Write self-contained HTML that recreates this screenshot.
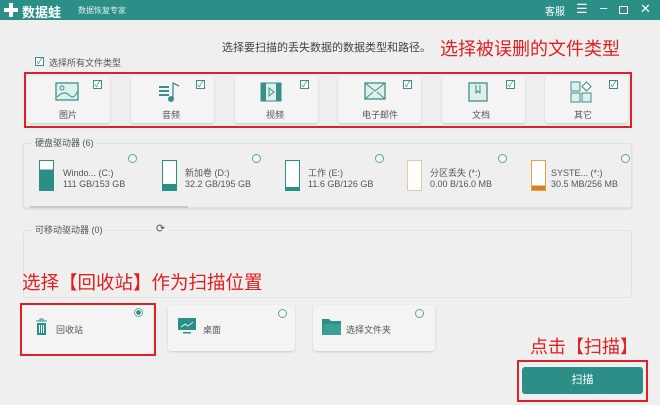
<!DOCTYPE html>
<html><head><meta charset="utf-8"><style>
*{margin:0;padding:0;box-sizing:border-box}
body{width:660px;height:405px;background:#efefef;font-family:"Liberation Sans","Noto Sans CJK SC",sans-serif;position:relative;overflow:hidden;color:#444}
.a{position:absolute}
.hdr{left:0;top:0;width:660px;height:20px;background:#2b8f88;color:#fff}
.red{color:#e02020;font-size:18px;white-space:nowrap}
.rb{border:2px solid #d8232a}
.card{background:#f4f4f4;box-shadow:0 1px 2px rgba(0,0,0,.15);border-radius:3px}
.cb{width:9px;height:9px;border:1px solid #3a8f88;background:#fff;font-size:8px;line-height:7px;text-align:center;color:#2b7f78}
.lbl{font-size:9px;color:#555;white-space:nowrap}
.rad{width:9px;height:9px;border:1px solid #5aa79f;border-radius:50%;background:#f6f6f6}
.box{border:1px solid #e2e2e2;background:#efefef;border-radius:3px}
.drv{width:15px;height:31px;border:1.5px solid #2b8f88;background:#fff}
</style></head><body>
<div class="a hdr">
 <div class="a" style="left:4px;top:3px;width:14px;height:14px"><div class="a" style="left:5px;top:0;width:4px;height:14px;background:#fff"></div><div class="a" style="left:0;top:5px;width:14px;height:4px;background:#fff"></div></div>
 <div class="a" style="left:22px;top:2px;font-size:13px;font-weight:bold">数据蛙</div>
 <div class="a" style="left:78px;top:5px;font-size:8px;opacity:.85">数据恢复专家</div>
 <div class="a" style="left:545px;top:3px;font-size:10px">客服</div>
 <div class="a" style="left:576px;top:1px;font-size:13px">☰</div>
 <div class="a" style="left:600px;top:0px;font-size:13px">–</div>
 <div class="a" style="left:619px;top:6px;width:9px;height:8px;border:1.5px solid #fff"></div>
 <div class="a" style="left:640px;top:1px;font-size:13px">✕</div>
</div>
<div class="a" style="left:222px;top:39px;font-size:11px;color:#444">选择要扫描的丢失数据的数据类型和路径。</div>
<div class="a red" style="left:440px;top:35px">选择被误删的文件类型</div>
<div class="a cb" style="left:35px;top:57px">✓</div>
<div class="a lbl" style="left:49px;top:56px">选择所有文件类型</div>
<div class="a rb" style="left:24px;top:72px;width:608px;height:56px"></div>
<div class="a card" style="left:27px;top:76px;width:83px;height:47px"></div>
<div class="a card" style="left:131px;top:76px;width:83px;height:47px"></div>
<div class="a card" style="left:235px;top:76px;width:83px;height:47px"></div>
<div class="a card" style="left:338px;top:76px;width:83px;height:47px"></div>
<div class="a card" style="left:442px;top:76px;width:83px;height:47px"></div>
<div class="a card" style="left:545px;top:76px;width:83px;height:47px"></div>
<div class="a cb" style="left:93px;top:80px">✓</div><div class="a cb" style="left:196px;top:80px">✓</div><div class="a cb" style="left:300px;top:80px">✓</div><div class="a cb" style="left:403px;top:80px">✓</div><div class="a cb" style="left:506px;top:80px">✓</div><div class="a cb" style="left:609px;top:80px">✓</div>
<svg class="a" style="left:55px;top:82px" width="24" height="20"><rect x="1" y="1" width="22" height="17" fill="#dff0ec" stroke="#3a9088" stroke-width="1.3"/><circle cx="7" cy="6" r="2" fill="none" stroke="#3a9088"/><path d="M2 15 Q9 8 14 13 T22 10" fill="none" stroke="#3a9088"/></svg>
<svg class="a" style="left:158px;top:81px" width="24" height="22"><path d="M1 6h10M1 10h10M1 14h10" stroke="#3a9088" stroke-width="2"/><path d="M15 18V2l6 3" fill="none" stroke="#3a9088" stroke-width="1.3"/><circle cx="13" cy="18" r="3" fill="#3a9088"/></svg>
<svg class="a" style="left:260px;top:82px" width="22" height="20"><rect x="1" y="1" width="20" height="18" fill="#dff0ec" stroke="#3a9088"/><rect x="1" y="1" width="5" height="18" fill="#3a9088"/><rect x="16" y="1" width="5" height="18" fill="#3a9088"/><path d="M9 6l5 4-5 4z" fill="none" stroke="#3a9088"/></svg>
<svg class="a" style="left:364px;top:82px" width="22" height="18"><rect x="1" y="1" width="20" height="16" fill="#dff0ec" stroke="#3a9088" stroke-width="1.3"/><path d="M1 1l10 8 10-8M1 17l8-7M21 17l-8-7" fill="none" stroke="#3a9088"/></svg>
<svg class="a" style="left:468px;top:82px" width="20" height="20"><rect x="1" y="1" width="18" height="18" fill="#dff0ec" stroke="#3a9088" stroke-width="1.3"/><path d="M8 3v8l2-2 2 2V3" fill="none" stroke="#3a9088"/></svg>
<svg class="a" style="left:570px;top:81px" width="22" height="22"><rect x="1" y="1" width="9" height="9" fill="#dff0ec" stroke="#3a9088"/><rect x="1" y="12" width="9" height="9" fill="#dff0ec" stroke="#3a9088"/><rect x="12" y="12" width="9" height="9" fill="#dff0ec" stroke="#3a9088"/><path d="M16.5 1l4.5 4.5-4.5 4.5-4.5-4.5z" fill="#fff" stroke="#3a9088"/></svg>
<div class="a lbl" style="left:59px;top:108px">图片</div><div class="a lbl" style="left:162px;top:108px">音频</div><div class="a lbl" style="left:266px;top:108px">视频</div><div class="a lbl" style="left:362px;top:108px">电子邮件</div><div class="a lbl" style="left:472px;top:108px">文档</div><div class="a lbl" style="left:574px;top:108px">其它</div>
<div class="a box" style="left:23px;top:143px;width:609px;height:65px;box-shadow:0 1px 2px rgba(0,0,0,.12)"></div>
<div class="a lbl" style="left:32px;top:136px;background:#efefef;padding:0 3px">硬盘驱动器 (6)</div>
<div class="a drv" style="left:39px;top:160px;background:linear-gradient(#fff 30%,#2b8f88 30%)"></div>
<div class="a drv" style="left:162px;top:160px;background:linear-gradient(#fff 80%,#2b8f88 80%)"></div>
<div class="a drv" style="left:285px;top:160px;background:linear-gradient(#fff 90%,#2b8f88 90%)"></div>
<div class="a drv" style="left:407px;top:160px;border-color:#e5c9a0"></div>
<div class="a drv" style="left:531px;top:160px;border-color:#e8a040;background:linear-gradient(#fff 85%,#d88020 85%)"></div>
<div class="a lbl" style="left:63px;top:168px;line-height:11px">Windo... (C:)<br>111 GB/153 GB</div>
<div class="a lbl" style="left:185px;top:168px;line-height:11px">新加卷 (D:)<br>32.2 GB/195 GB</div>
<div class="a lbl" style="left:308px;top:168px;line-height:11px">工作 (E:)<br>11.6 GB/126 GB</div>
<div class="a lbl" style="left:430px;top:168px;line-height:11px">分区丢失 (*:)<br>0.00 B/16.0 MB</div>
<div class="a lbl" style="left:551px;top:168px;line-height:11px">SYSTE... (*:)<br>30.5 MB/256 MB</div>
<div class="a rad" style="left:128px;top:154px"></div><div class="a rad" style="left:252px;top:154px"></div><div class="a rad" style="left:375px;top:154px"></div><div class="a rad" style="left:498px;top:154px"></div><div class="a rad" style="left:621px;top:154px"></div>
<div class="a" style="left:30px;top:206px;width:158px;height:2px;background:#c8c8c8"></div>
<div class="a box" style="left:23px;top:230px;width:609px;height:68px"></div>
<div class="a lbl" style="left:32px;top:223px;background:#efefef;padding:0 3px">可移动驱动器 (0)</div>
<div class="a" style="left:153px;top:222px;font-size:11px;color:#555;background:#efefef;padding:0 3px">⟳</div>
<div class="a red" style="left:22px;top:269px;font-size:18.5px">选择【回收站】作为扫描位置</div>
<div class="a card" style="left:22px;top:305px;width:131px;height:49px"></div>
<div class="a rb" style="left:20px;top:303px;width:136px;height:53px"></div>
<div class="a card" style="left:168px;top:305px;width:127px;height:46px"></div>
<div class="a card" style="left:313px;top:305px;width:122px;height:46px"></div>
<svg class="a" style="left:35px;top:318px" width="13" height="18"><path d="M1 3h11M5 3V1h3v2" stroke="#2b8f88" fill="none"/><rect x="2" y="5" width="9" height="12" fill="#2b8f88"/><path d="M4.5 7v8M6.5 7v8M8.5 7v8" stroke="#fff"/></svg>
<div class="a lbl" style="left:56px;top:323px">回收站</div>
<div class="a" style="left:134px;top:308px;width:9px;height:9px;border:1px solid #5aa79f;border-radius:50%;background:radial-gradient(#2b8f88 45%,#fff 50%)"></div>
<svg class="a" style="left:178px;top:318px" width="18" height="17"><rect x="0" y="0" width="18" height="12" fill="#2b8f88"/><path d="M3 9l4-3 3 2 5-4" stroke="#fff" fill="none" stroke-width=".8"/><rect x="5" y="14" width="8" height="1.5" fill="#2b8f88"/></svg>
<div class="a lbl" style="left:203px;top:323px">桌面</div>
<div class="a rad" style="left:278px;top:309px"></div>
<svg class="a" style="left:322px;top:318px" width="19" height="17"><path d="M0 1h7l2 2h10v14H0z" fill="#2b8f88"/><path d="M2 6h17v11H0z" fill="#3aa096"/></svg>
<div class="a lbl" style="left:346px;top:323px">选择文件夹</div>
<div class="a rad" style="left:415px;top:309px"></div>
<div class="a red" style="left:530px;top:333px">点击【扫描】</div>
<div class="a rb" style="left:517px;top:360px;width:131px;height:42px"></div>
<div class="a" style="left:522px;top:367px;width:121px;height:27px;background:#2b8f88;border-radius:3px;color:#fff;font-size:11px;text-align:center;line-height:27px">扫描</div>
</body></html>
